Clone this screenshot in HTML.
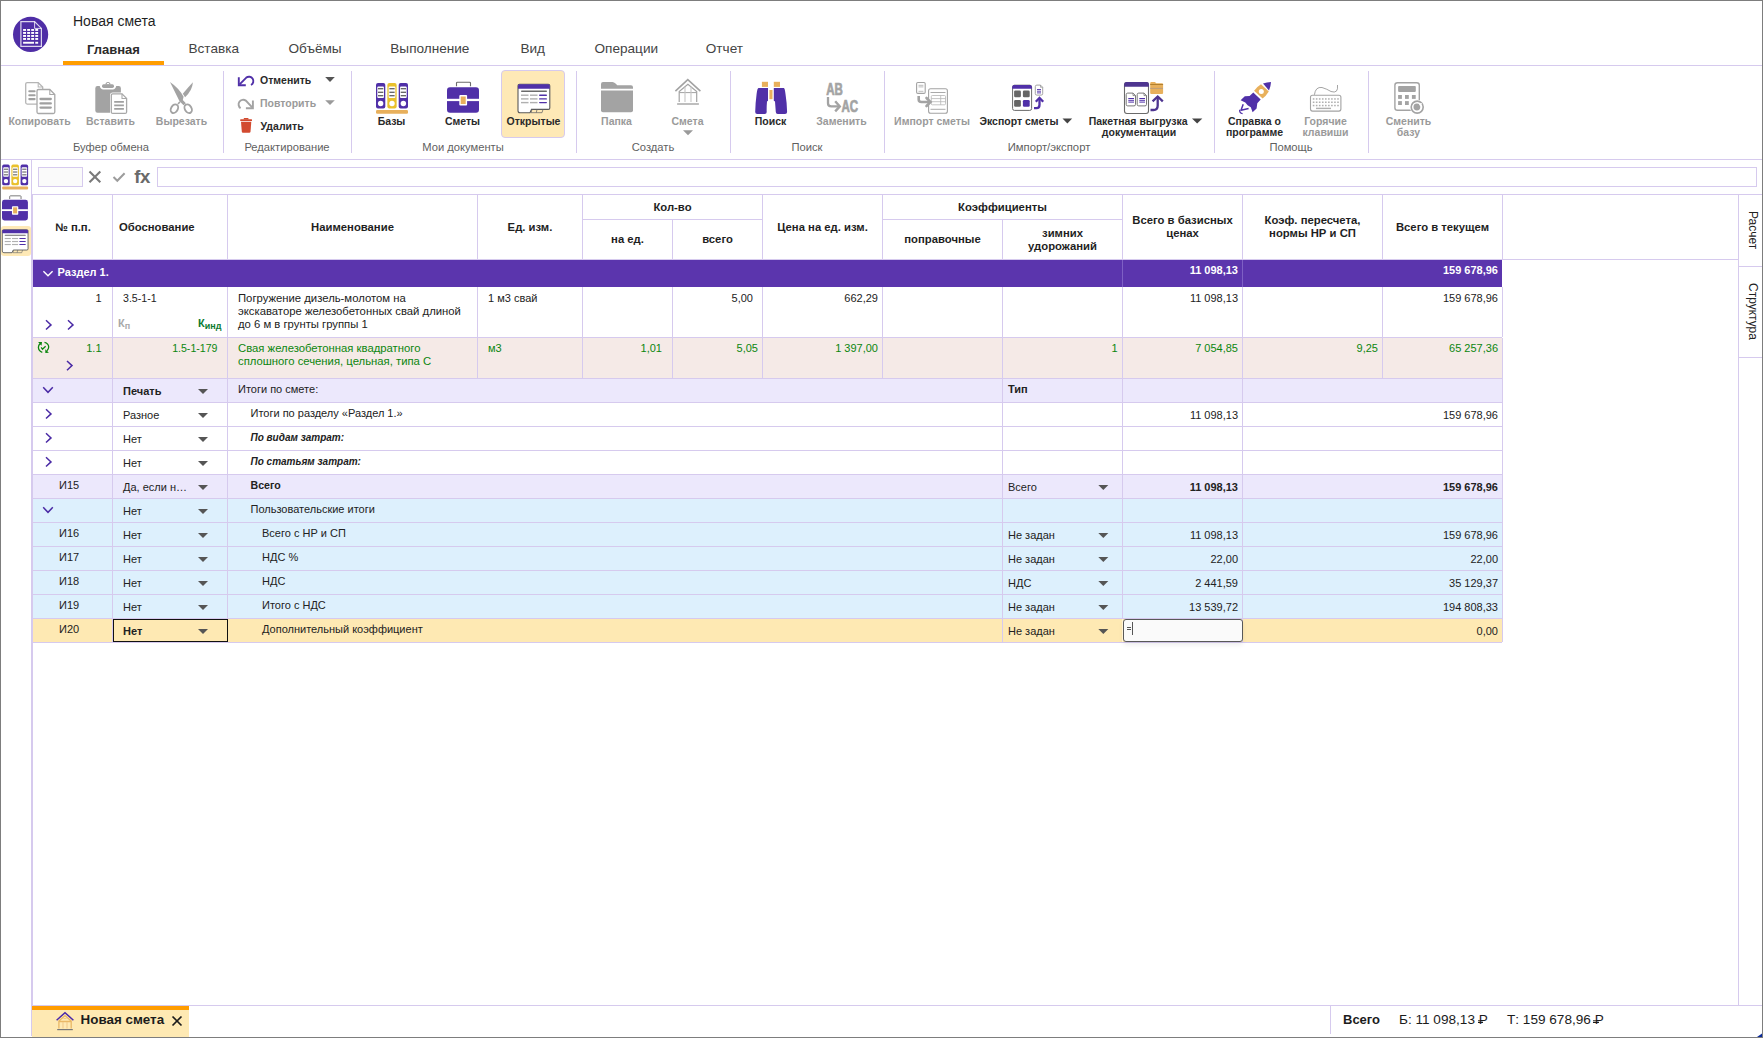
<!DOCTYPE html>
<html><head><meta charset="utf-8"><style>
html,body{margin:0;padding:0;}
body{width:1763px;height:1038px;position:relative;overflow:hidden;background:#fff;font-family:"Liberation Sans", sans-serif;}
#bg>div{position:absolute;}
.t{position:absolute;white-space:nowrap;line-height:1;}
svg{position:absolute;left:0;top:0;}
.rub{position:relative;}
.rub::after{content:'';position:absolute;left:-1.2px;width:5.2px;top:0.7em;height:1.2px;background:currentColor;box-shadow:0 -1.7px 0 currentColor;}
</style></head><body>
<div id="bg">
<div style="left:63px;top:61px;width:101px;height:4px;background:#ff9d00;"></div>
<div style="left:1px;top:65px;width:1761px;height:1px;background:#d6caee;"></div>
<div style="left:223px;top:71px;width:1px;height:82px;background:#d6caee;"></div>
<div style="left:351px;top:71px;width:1px;height:82px;background:#d6caee;"></div>
<div style="left:576px;top:71px;width:1px;height:82px;background:#d6caee;"></div>
<div style="left:730px;top:71px;width:1px;height:82px;background:#d6caee;"></div>
<div style="left:884px;top:71px;width:1px;height:82px;background:#d6caee;"></div>
<div style="left:1214px;top:71px;width:1px;height:82px;background:#d6caee;"></div>
<div style="left:1368px;top:71px;width:1px;height:82px;background:#d6caee;"></div>
<div style="left:1px;top:159px;width:1761px;height:1px;background:#d6caee;"></div>
<div style="left:501px;top:70px;width:64px;height:68px;background:#fee9b6;border:1px solid #d6caee;border-radius:4px;box-sizing:border-box;"></div>
<div style="left:1px;top:226px;width:30px;height:30px;background:#fee9b6;border-radius:3px;"></div>
<div style="left:31px;top:160px;width:1px;height:876px;background:#d6caee;"></div>
<div style="left:38px;top:167px;width:45px;height:20px;background:#fafafa;border:1px solid #d6caee;box-sizing:border-box;"></div>
<div style="left:157px;top:167px;width:1600px;height:20px;background:#fff;border:1px solid #d6caee;box-sizing:border-box;"></div>
<div style="left:32px;top:194px;width:1730px;height:1px;background:#d6caee;"></div>
<div style="left:32px;top:194px;width:1px;height:811px;background:#d6caee;"></div>
<div style="left:1738px;top:194px;width:1px;height:811px;background:#d6caee;"></div>
<div style="left:32px;top:1005px;width:1730px;height:1px;background:#d6caee;"></div>
<div style="left:112px;top:195px;width:1px;height:64px;background:#d6caee;"></div>
<div style="left:227px;top:195px;width:1px;height:64px;background:#d6caee;"></div>
<div style="left:477px;top:195px;width:1px;height:64px;background:#d6caee;"></div>
<div style="left:582px;top:195px;width:1px;height:64px;background:#d6caee;"></div>
<div style="left:672px;top:195px;width:1px;height:64px;background:#d6caee;"></div>
<div style="left:762px;top:195px;width:1px;height:64px;background:#d6caee;"></div>
<div style="left:882px;top:195px;width:1px;height:64px;background:#d6caee;"></div>
<div style="left:1002px;top:195px;width:1px;height:64px;background:#d6caee;"></div>
<div style="left:1122px;top:195px;width:1px;height:64px;background:#d6caee;"></div>
<div style="left:1242px;top:195px;width:1px;height:64px;background:#d6caee;"></div>
<div style="left:1382px;top:195px;width:1px;height:64px;background:#d6caee;"></div>
<div style="left:1502px;top:195px;width:1px;height:64px;background:#d6caee;"></div>
<div style="left:32px;top:259px;width:1706px;height:1px;background:#d6caee;"></div>
<div style="left:582px;top:219px;width:180px;height:1px;background:#d6caee;"></div>
<div style="left:882px;top:219px;width:240px;height:1px;background:#d6caee;"></div>
<div style="left:672px;top:195px;width:1px;height:24px;background:#fff;"></div>
<div style="left:1002px;top:195px;width:1px;height:24px;background:#fff;"></div>
<div style="left:1738px;top:266px;width:24px;height:1px;background:#d6caee;"></div>
<div style="left:1738px;top:357px;width:24px;height:1px;background:#d6caee;"></div>
<div style="left:33px;top:260px;width:1469px;height:27px;background:#5b35ad;"></div>
<div style="left:1122px;top:260px;width:1px;height:27px;background:#7e60c4;"></div>
<div style="left:1242px;top:260px;width:1px;height:27px;background:#7e60c4;"></div>
<div style="left:112px;top:287px;width:1px;height:50px;background:#d6caee;"></div>
<div style="left:227px;top:287px;width:1px;height:50px;background:#d6caee;"></div>
<div style="left:477px;top:287px;width:1px;height:50px;background:#d6caee;"></div>
<div style="left:582px;top:287px;width:1px;height:50px;background:#d6caee;"></div>
<div style="left:672px;top:287px;width:1px;height:50px;background:#d6caee;"></div>
<div style="left:762px;top:287px;width:1px;height:50px;background:#d6caee;"></div>
<div style="left:882px;top:287px;width:1px;height:50px;background:#d6caee;"></div>
<div style="left:1002px;top:287px;width:1px;height:50px;background:#d6caee;"></div>
<div style="left:1122px;top:287px;width:1px;height:50px;background:#d6caee;"></div>
<div style="left:1242px;top:287px;width:1px;height:50px;background:#d6caee;"></div>
<div style="left:1382px;top:287px;width:1px;height:50px;background:#d6caee;"></div>
<div style="left:1502px;top:287px;width:1px;height:50px;background:#d6caee;"></div>
<div style="left:32px;top:337px;width:1470px;height:1px;background:#d6caee;"></div>
<div style="left:33px;top:338px;width:1469px;height:40px;background:#f5eae7;"></div>
<div style="left:112px;top:338px;width:1px;height:40px;background:#d6caee;"></div>
<div style="left:227px;top:338px;width:1px;height:40px;background:#d6caee;"></div>
<div style="left:477px;top:338px;width:1px;height:40px;background:#d6caee;"></div>
<div style="left:582px;top:338px;width:1px;height:40px;background:#d6caee;"></div>
<div style="left:672px;top:338px;width:1px;height:40px;background:#d6caee;"></div>
<div style="left:762px;top:338px;width:1px;height:40px;background:#d6caee;"></div>
<div style="left:882px;top:338px;width:1px;height:40px;background:#d6caee;"></div>
<div style="left:1002px;top:338px;width:1px;height:40px;background:#d6caee;"></div>
<div style="left:1122px;top:338px;width:1px;height:40px;background:#d6caee;"></div>
<div style="left:1242px;top:338px;width:1px;height:40px;background:#d6caee;"></div>
<div style="left:1382px;top:338px;width:1px;height:40px;background:#d6caee;"></div>
<div style="left:1502px;top:338px;width:1px;height:40px;background:#d6caee;"></div>
<div style="left:32px;top:378px;width:1470px;height:1px;background:#d6caee;"></div>
<div style="left:33px;top:379px;width:1469px;height:23px;background:#ece8fc;"></div>
<div style="left:112px;top:378px;width:1px;height:24px;background:#d6caee;"></div>
<div style="left:227px;top:378px;width:1px;height:24px;background:#d6caee;"></div>
<div style="left:1002px;top:378px;width:1px;height:24px;background:#d6caee;"></div>
<div style="left:1122px;top:378px;width:1px;height:24px;background:#d6caee;"></div>
<div style="left:1242px;top:378px;width:1px;height:24px;background:#d6caee;"></div>
<div style="left:1502px;top:378px;width:1px;height:24px;background:#d6caee;"></div>
<div style="left:32px;top:402px;width:1470px;height:1px;background:#d6caee;"></div>
<div style="left:112px;top:402px;width:1px;height:24px;background:#d6caee;"></div>
<div style="left:227px;top:402px;width:1px;height:24px;background:#d6caee;"></div>
<div style="left:1002px;top:402px;width:1px;height:24px;background:#d6caee;"></div>
<div style="left:1122px;top:402px;width:1px;height:24px;background:#d6caee;"></div>
<div style="left:1242px;top:402px;width:1px;height:24px;background:#d6caee;"></div>
<div style="left:1502px;top:402px;width:1px;height:24px;background:#d6caee;"></div>
<div style="left:32px;top:426px;width:1470px;height:1px;background:#d6caee;"></div>
<div style="left:112px;top:426px;width:1px;height:24px;background:#d6caee;"></div>
<div style="left:227px;top:426px;width:1px;height:24px;background:#d6caee;"></div>
<div style="left:1002px;top:426px;width:1px;height:24px;background:#d6caee;"></div>
<div style="left:1122px;top:426px;width:1px;height:24px;background:#d6caee;"></div>
<div style="left:1242px;top:426px;width:1px;height:24px;background:#d6caee;"></div>
<div style="left:1502px;top:426px;width:1px;height:24px;background:#d6caee;"></div>
<div style="left:32px;top:450px;width:1470px;height:1px;background:#d6caee;"></div>
<div style="left:112px;top:450px;width:1px;height:24px;background:#d6caee;"></div>
<div style="left:227px;top:450px;width:1px;height:24px;background:#d6caee;"></div>
<div style="left:1002px;top:450px;width:1px;height:24px;background:#d6caee;"></div>
<div style="left:1122px;top:450px;width:1px;height:24px;background:#d6caee;"></div>
<div style="left:1242px;top:450px;width:1px;height:24px;background:#d6caee;"></div>
<div style="left:1502px;top:450px;width:1px;height:24px;background:#d6caee;"></div>
<div style="left:32px;top:474px;width:1470px;height:1px;background:#d6caee;"></div>
<div style="left:33px;top:475px;width:1469px;height:23px;background:#ece8fc;"></div>
<div style="left:112px;top:474px;width:1px;height:24px;background:#d6caee;"></div>
<div style="left:227px;top:474px;width:1px;height:24px;background:#d6caee;"></div>
<div style="left:1002px;top:474px;width:1px;height:24px;background:#d6caee;"></div>
<div style="left:1122px;top:474px;width:1px;height:24px;background:#d6caee;"></div>
<div style="left:1242px;top:474px;width:1px;height:24px;background:#d6caee;"></div>
<div style="left:1502px;top:474px;width:1px;height:24px;background:#d6caee;"></div>
<div style="left:32px;top:498px;width:1470px;height:1px;background:#d6caee;"></div>
<div style="left:33px;top:499px;width:1469px;height:23px;background:#ddf0fd;"></div>
<div style="left:112px;top:498px;width:1px;height:24px;background:#d6caee;"></div>
<div style="left:227px;top:498px;width:1px;height:24px;background:#d6caee;"></div>
<div style="left:1002px;top:498px;width:1px;height:24px;background:#d6caee;"></div>
<div style="left:1122px;top:498px;width:1px;height:24px;background:#d6caee;"></div>
<div style="left:1242px;top:498px;width:1px;height:24px;background:#d6caee;"></div>
<div style="left:1502px;top:498px;width:1px;height:24px;background:#d6caee;"></div>
<div style="left:32px;top:522px;width:1470px;height:1px;background:#d6caee;"></div>
<div style="left:33px;top:523px;width:1469px;height:23px;background:#ddf0fd;"></div>
<div style="left:112px;top:522px;width:1px;height:24px;background:#d6caee;"></div>
<div style="left:227px;top:522px;width:1px;height:24px;background:#d6caee;"></div>
<div style="left:1002px;top:522px;width:1px;height:24px;background:#d6caee;"></div>
<div style="left:1122px;top:522px;width:1px;height:24px;background:#d6caee;"></div>
<div style="left:1242px;top:522px;width:1px;height:24px;background:#d6caee;"></div>
<div style="left:1502px;top:522px;width:1px;height:24px;background:#d6caee;"></div>
<div style="left:32px;top:546px;width:1470px;height:1px;background:#d6caee;"></div>
<div style="left:33px;top:547px;width:1469px;height:23px;background:#ddf0fd;"></div>
<div style="left:112px;top:546px;width:1px;height:24px;background:#d6caee;"></div>
<div style="left:227px;top:546px;width:1px;height:24px;background:#d6caee;"></div>
<div style="left:1002px;top:546px;width:1px;height:24px;background:#d6caee;"></div>
<div style="left:1122px;top:546px;width:1px;height:24px;background:#d6caee;"></div>
<div style="left:1242px;top:546px;width:1px;height:24px;background:#d6caee;"></div>
<div style="left:1502px;top:546px;width:1px;height:24px;background:#d6caee;"></div>
<div style="left:32px;top:570px;width:1470px;height:1px;background:#d6caee;"></div>
<div style="left:33px;top:571px;width:1469px;height:23px;background:#ddf0fd;"></div>
<div style="left:112px;top:570px;width:1px;height:24px;background:#d6caee;"></div>
<div style="left:227px;top:570px;width:1px;height:24px;background:#d6caee;"></div>
<div style="left:1002px;top:570px;width:1px;height:24px;background:#d6caee;"></div>
<div style="left:1122px;top:570px;width:1px;height:24px;background:#d6caee;"></div>
<div style="left:1242px;top:570px;width:1px;height:24px;background:#d6caee;"></div>
<div style="left:1502px;top:570px;width:1px;height:24px;background:#d6caee;"></div>
<div style="left:32px;top:594px;width:1470px;height:1px;background:#d6caee;"></div>
<div style="left:33px;top:595px;width:1469px;height:23px;background:#ddf0fd;"></div>
<div style="left:112px;top:594px;width:1px;height:24px;background:#d6caee;"></div>
<div style="left:227px;top:594px;width:1px;height:24px;background:#d6caee;"></div>
<div style="left:1002px;top:594px;width:1px;height:24px;background:#d6caee;"></div>
<div style="left:1122px;top:594px;width:1px;height:24px;background:#d6caee;"></div>
<div style="left:1242px;top:594px;width:1px;height:24px;background:#d6caee;"></div>
<div style="left:1502px;top:594px;width:1px;height:24px;background:#d6caee;"></div>
<div style="left:32px;top:618px;width:1470px;height:1px;background:#d6caee;"></div>
<div style="left:33px;top:619px;width:1469px;height:23px;background:#fee9b3;"></div>
<div style="left:112px;top:618px;width:1px;height:24px;background:#d6caee;"></div>
<div style="left:227px;top:618px;width:1px;height:24px;background:#d6caee;"></div>
<div style="left:1002px;top:618px;width:1px;height:24px;background:#d6caee;"></div>
<div style="left:1122px;top:618px;width:1px;height:24px;background:#d6caee;"></div>
<div style="left:1242px;top:618px;width:1px;height:24px;background:#d6caee;"></div>
<div style="left:1502px;top:618px;width:1px;height:24px;background:#d6caee;"></div>
<div style="left:32px;top:642px;width:1470px;height:1px;background:#d6caee;"></div>
<div style="left:1123px;top:619px;width:120px;height:23px;background:#fafafa;border:1px solid #585858;border-radius:3px;box-sizing:border-box;box-shadow:0 3px 5px rgba(0,0,0,0.07);"></div>
<div style="left:1127px;top:627px;width:4.3px;height:1.1px;background:#555;"></div>
<div style="left:1127px;top:629.3px;width:4.3px;height:1.1px;background:#555;"></div>
<div style="left:1132px;top:622px;width:1.2px;height:13px;background:#555;"></div>
<div style="left:113px;top:619px;width:115px;height:23px;background:transparent;border:1.5px solid #111;box-sizing:border-box;"></div>
<div style="left:1122px;top:619px;width:1px;height:23px;background:#fff3d6;"></div>
<div style="left:32px;top:1006px;width:157px;height:4px;background:#ff9d00;"></div>
<div style="left:32px;top:1010px;width:157px;height:27px;background:#fee9b3;"></div>
<div style="left:1330px;top:1005px;width:1px;height:29px;background:#d6caee;"></div>
<div style="left:0px;top:0px;width:1763px;height:1px;background:#7d7d7d;"></div>
<div style="left:0px;top:0px;width:1px;height:1038px;background:#7d7d7d;"></div>
<div style="left:1762px;top:0px;width:1px;height:1038px;background:#7d7d7d;"></div>
<div style="left:0px;top:1037px;width:1763px;height:1px;background:#7d7d7d;"></div>
</div>
<div class="t" style="top:14.35px;font-size:14px;color:#1f1f1f;left:73px;">Новая смета</div>
<div class="t" style="top:43.00px;font-size:13px;color:#2b2b2b;font-weight:700;left:87px;">Главная</div>
<div class="t" style="top:42.49px;font-size:13.6px;color:#444;left:188.5px;">Вставка</div>
<div class="t" style="top:42.49px;font-size:13.6px;color:#444;left:288.5px;">Объёмы</div>
<div class="t" style="top:42.49px;font-size:13.6px;color:#444;left:390.3px;">Выполнение</div>
<div class="t" style="top:42.49px;font-size:13.6px;color:#444;left:520.4px;">Вид</div>
<div class="t" style="top:42.49px;font-size:13.6px;color:#444;left:594.5px;">Операции</div>
<div class="t" style="top:42.49px;font-size:13.6px;color:#444;left:705.8px;">Отчет</div>
<div class="t" style="top:116.11px;font-size:10.5px;color:#9a9a9a;font-weight:700;left:-110.5px;width:300px;text-align:center;">Копировать</div>
<div class="t" style="top:116.11px;font-size:10.5px;color:#9a9a9a;font-weight:700;left:-39.5px;width:300px;text-align:center;">Вставить</div>
<div class="t" style="top:116.11px;font-size:10.5px;color:#9a9a9a;font-weight:700;left:31.5px;width:300px;text-align:center;">Вырезать</div>
<div class="t" style="top:141.82px;font-size:11.2px;color:#5f5f5f;left:-39px;width:300px;text-align:center;">Буфер обмена</div>
<div class="t" style="top:74.91px;font-size:10.5px;color:#2a2a2a;font-weight:700;left:260px;">Отменить</div>
<div class="t" style="top:97.71px;font-size:10.5px;color:#9a9a9a;font-weight:700;left:260px;">Повторить</div>
<div class="t" style="top:120.61px;font-size:10.5px;color:#2a2a2a;font-weight:700;left:260.5px;">Удалить</div>
<div class="t" style="top:141.82px;font-size:11.2px;color:#5f5f5f;left:137px;width:300px;text-align:center;">Редактирование</div>
<div class="t" style="top:115.61px;font-size:10.5px;color:#2a2a2a;font-weight:700;left:241.5px;width:300px;text-align:center;">Базы</div>
<div class="t" style="top:115.61px;font-size:10.5px;color:#2a2a2a;font-weight:700;left:312.5px;width:300px;text-align:center;">Сметы</div>
<div class="t" style="top:115.61px;font-size:10.5px;color:#2a2a2a;font-weight:700;left:383.5px;width:300px;text-align:center;">Открытые</div>
<div class="t" style="top:141.82px;font-size:11.2px;color:#5f5f5f;left:313px;width:300px;text-align:center;">Мои документы</div>
<div class="t" style="top:115.61px;font-size:10.5px;color:#9a9a9a;font-weight:700;left:466.5px;width:300px;text-align:center;">Папка</div>
<div class="t" style="top:115.61px;font-size:10.5px;color:#9a9a9a;font-weight:700;left:537.5px;width:300px;text-align:center;">Смета</div>
<div class="t" style="top:141.82px;font-size:11.2px;color:#5f5f5f;left:503px;width:300px;text-align:center;">Создать</div>
<div class="t" style="top:115.61px;font-size:10.5px;color:#2a2a2a;font-weight:700;left:620.5px;width:300px;text-align:center;">Поиск</div>
<div class="t" style="top:115.61px;font-size:10.5px;color:#9a9a9a;font-weight:700;left:691.5px;width:300px;text-align:center;">Заменить</div>
<div class="t" style="top:141.82px;font-size:11.2px;color:#5f5f5f;left:657px;width:300px;text-align:center;">Поиск</div>
<div class="t" style="top:116.41px;font-size:10.5px;color:#9a9a9a;font-weight:700;left:782px;width:300px;text-align:center;">Импорт сметы</div>
<div class="t" style="top:116.41px;font-size:10.5px;color:#2a2a2a;font-weight:700;left:979.5px;">Экспорт сметы</div>
<div class="t" style="top:116.41px;font-size:10.5px;color:#2a2a2a;font-weight:700;left:1088.7px;">Пакетная выгрузка</div>
<div class="t" style="top:126.91px;font-size:10.5px;color:#2a2a2a;font-weight:700;left:989px;width:300px;text-align:center;">документации</div>
<div class="t" style="top:142.03px;font-size:11.3px;color:#5f5f5f;left:899px;width:300px;text-align:center;">Импорт/экспорт</div>
<div class="t" style="top:115.71px;font-size:10.5px;color:#2a2a2a;font-weight:700;left:1104.5px;width:300px;text-align:center;">Справка о</div>
<div class="t" style="top:126.61px;font-size:10.5px;color:#2a2a2a;font-weight:700;left:1104.5px;width:300px;text-align:center;">программе</div>
<div class="t" style="top:115.71px;font-size:10.5px;color:#9a9a9a;font-weight:700;left:1175.5px;width:300px;text-align:center;">Горячие</div>
<div class="t" style="top:126.61px;font-size:10.5px;color:#9a9a9a;font-weight:700;left:1175.5px;width:300px;text-align:center;">клавиши</div>
<div class="t" style="top:141.82px;font-size:11.2px;color:#5f5f5f;left:1141px;width:300px;text-align:center;">Помощь</div>
<div class="t" style="top:115.71px;font-size:10.5px;color:#9a9a9a;font-weight:700;left:1258.5px;width:300px;text-align:center;">Сменить</div>
<div class="t" style="top:126.61px;font-size:10.5px;color:#9a9a9a;font-weight:700;left:1258.5px;width:300px;text-align:center;">базу</div>
<div class="t" style="top:167.76px;font-size:18.6px;color:#6a6a6a;font-weight:700;left:134.3px;letter-spacing:-0.6px;">fx</div>
<div class="t" style="top:221.53px;font-size:11.3px;color:#1f1f1f;font-weight:700;left:-77px;width:300px;text-align:center;">№ п.п.</div>
<div class="t" style="top:221.53px;font-size:11.3px;color:#1f1f1f;font-weight:700;left:119px;">Обоснование</div>
<div class="t" style="top:221.53px;font-size:11.3px;color:#1f1f1f;font-weight:700;left:202.5px;width:300px;text-align:center;">Наименование</div>
<div class="t" style="top:221.53px;font-size:11.3px;color:#1f1f1f;font-weight:700;left:380px;width:300px;text-align:center;">Ед. изм.</div>
<div class="t" style="top:201.93px;font-size:11.3px;color:#1f1f1f;font-weight:700;left:522.5px;width:300px;text-align:center;">Кол-во</div>
<div class="t" style="top:234.13px;font-size:11.3px;color:#1f1f1f;font-weight:700;left:477.5px;width:300px;text-align:center;">на ед.</div>
<div class="t" style="top:234.13px;font-size:11.3px;color:#1f1f1f;font-weight:700;left:567.5px;width:300px;text-align:center;">всего</div>
<div class="t" style="top:221.53px;font-size:11.3px;color:#1f1f1f;font-weight:700;left:672.5px;width:300px;text-align:center;">Цена на ед. изм.</div>
<div class="t" style="top:201.93px;font-size:11.3px;color:#1f1f1f;font-weight:700;left:852.5px;width:300px;text-align:center;">Коэффициенты</div>
<div class="t" style="top:234.13px;font-size:11.3px;color:#1f1f1f;font-weight:700;left:792.5px;width:300px;text-align:center;">поправочные</div>
<div class="t" style="top:228.03px;font-size:11.3px;color:#1f1f1f;font-weight:700;left:912.5px;width:300px;text-align:center;">зимних</div>
<div class="t" style="top:241.43px;font-size:11.3px;color:#1f1f1f;font-weight:700;left:912.5px;width:300px;text-align:center;">удорожаний</div>
<div class="t" style="top:214.83px;font-size:11.3px;color:#1f1f1f;font-weight:700;left:1032.5px;width:300px;text-align:center;">Всего в базисных</div>
<div class="t" style="top:228.13px;font-size:11.3px;color:#1f1f1f;font-weight:700;left:1032.5px;width:300px;text-align:center;">ценах</div>
<div class="t" style="top:214.83px;font-size:11.3px;color:#1f1f1f;font-weight:700;left:1162.5px;width:300px;text-align:center;">Коэф. пересчета,</div>
<div class="t" style="top:228.13px;font-size:11.3px;color:#1f1f1f;font-weight:700;left:1162.5px;width:300px;text-align:center;">нормы НР и СП</div>
<div class="t" style="top:221.83px;font-size:11.3px;color:#1f1f1f;font-weight:700;left:1292.5px;width:300px;text-align:center;">Всего в текущем</div>
<div class="t" style="left:1747px;top:210.5px;font-size:12px;color:#222;writing-mode:vertical-rl;">Расчет</div>
<div class="t" style="left:1747px;top:283px;font-size:12px;color:#222;writing-mode:vertical-rl;">Структура</div>
<div class="t" style="top:267.19px;font-size:11px;color:#fff;font-weight:700;left:57.5px;">Раздел 1.</div>
<div class="t" style="top:264.69px;font-size:11px;color:#fff;font-weight:700;right:525px;">11 098,13</div>
<div class="t" style="top:264.69px;font-size:11px;color:#fff;font-weight:700;right:265px;">159 678,96</div>
<div class="t" style="top:293.29px;font-size:11px;color:#222;right:1661.5px;">1</div>
<div class="t" style="top:292.83px;font-size:10.6px;color:#222;left:123px;">3.5-1-1</div>
<div class="t" style="top:317.89px;font-size:11px;color:#a8a8a8;font-weight:700;left:118px;">К<span style="font-size:9px;position:relative;top:2.5px">п</span></div>
<div class="t" style="top:317.89px;font-size:11px;color:#0b7a30;font-weight:700;left:198px;">К<span style="font-size:9px;position:relative;top:2.5px">инд</span></div>
<div class="t" style="top:293.23px;font-size:11.3px;color:#222;left:238px;">Погружение дизель-молотом на</div>
<div class="t" style="top:306.13px;font-size:11.3px;color:#222;left:238px;">экскаваторе железобетонных свай длиной</div>
<div class="t" style="top:319.03px;font-size:11.3px;color:#222;left:238px;">до 6 м в грунты группы 1</div>
<div class="t" style="top:293.29px;font-size:11px;color:#222;left:488px;">1 м3 свай</div>
<div class="t" style="top:293.29px;font-size:11px;color:#222;right:1010px;">5,00</div>
<div class="t" style="top:293.29px;font-size:11px;color:#222;right:885px;">662,29</div>
<div class="t" style="top:293.29px;font-size:11px;color:#222;right:525px;">11 098,13</div>
<div class="t" style="top:293.29px;font-size:11px;color:#222;right:265px;">159 678,96</div>
<div class="t" style="top:343.09px;font-size:11px;color:#0b860e;right:1661.5px;">1.1</div>
<div class="t" style="top:343.43px;font-size:10.6px;color:#0b860e;right:1545.5px;">1.5-1-179</div>
<div class="t" style="top:343.23px;font-size:11.3px;color:#0b860e;left:238px;">Свая железобетонная квадратного</div>
<div class="t" style="top:356.13px;font-size:11.3px;color:#0b860e;left:238px;">сплошного сечения, цельная, типа С</div>
<div class="t" style="top:343.19px;font-size:11px;color:#0b860e;left:488px;">м3</div>
<div class="t" style="top:343.49px;font-size:11px;color:#0b860e;right:1101px;">1,01</div>
<div class="t" style="top:343.49px;font-size:11px;color:#0b860e;right:1005px;">5,05</div>
<div class="t" style="top:343.49px;font-size:11px;color:#0b860e;right:885px;">1 397,00</div>
<div class="t" style="top:343.49px;font-size:11px;color:#0b860e;right:645.5px;">1</div>
<div class="t" style="top:342.99px;font-size:11px;color:#0b860e;right:525px;">7 054,85</div>
<div class="t" style="top:342.99px;font-size:11px;color:#0b860e;right:385px;">9,25</div>
<div class="t" style="top:342.99px;font-size:11px;color:#0b860e;right:265px;">65 257,36</div>
<div class="t" style="top:386.49px;font-size:11px;color:#222;font-weight:700;left:123px;">Печать</div>
<div class="t" style="top:383.89px;font-size:11px;color:#222;left:238px;">Итоги по смете:</div>
<div class="t" style="top:383.99px;font-size:11px;color:#222;font-weight:700;left:1008px;">Тип</div>
<div class="t" style="top:410.49px;font-size:11px;color:#222;left:123px;">Разное</div>
<div class="t" style="top:407.89px;font-size:11px;color:#222;left:250.5px;">Итоги по разделу «Раздел 1.»</div>
<div class="t" style="top:410.29px;font-size:11px;color:#222;right:525px;">11 098,13</div>
<div class="t" style="top:410.29px;font-size:11px;color:#222;right:265px;">159 678,96</div>
<div class="t" style="top:434.49px;font-size:11px;color:#222;left:123px;">Нет</div>
<div class="t" style="top:432.74px;font-size:10px;color:#222;font-weight:700;font-style:italic;left:250.5px;">По видам затрат:</div>
<div class="t" style="top:458.49px;font-size:11px;color:#222;left:123px;">Нет</div>
<div class="t" style="top:456.74px;font-size:10px;color:#222;font-weight:700;font-style:italic;left:250.5px;">По статьям затрат:</div>
<div class="t" style="top:480.49px;font-size:11px;color:#222;left:59px;">И15</div>
<div class="t" style="top:482.49px;font-size:11px;color:#222;left:123px;">Да, если н…</div>
<div class="t" style="top:480.23px;font-size:10.6px;color:#222;font-weight:700;left:250.5px;">Всего</div>
<div class="t" style="top:482.29px;font-size:11px;color:#222;left:1008px;">Всего</div>
<div class="t" style="top:482.29px;font-size:11px;color:#222;font-weight:700;right:525px;">11 098,13</div>
<div class="t" style="top:482.29px;font-size:11px;color:#222;font-weight:700;right:265px;">159 678,96</div>
<div class="t" style="top:506.49px;font-size:11px;color:#222;left:123px;">Нет</div>
<div class="t" style="top:503.89px;font-size:11px;color:#222;left:250.5px;">Пользовательские итоги</div>
<div class="t" style="top:528.49px;font-size:11px;color:#222;left:59px;">И16</div>
<div class="t" style="top:530.49px;font-size:11px;color:#222;left:123px;">Нет</div>
<div class="t" style="top:527.89px;font-size:11px;color:#222;left:262px;">Всего с НР и СП</div>
<div class="t" style="top:530.29px;font-size:11px;color:#222;left:1008px;">Не задан</div>
<div class="t" style="top:530.29px;font-size:11px;color:#222;right:525px;">11 098,13</div>
<div class="t" style="top:530.29px;font-size:11px;color:#222;right:265px;">159 678,96</div>
<div class="t" style="top:552.49px;font-size:11px;color:#222;left:59px;">И17</div>
<div class="t" style="top:554.49px;font-size:11px;color:#222;left:123px;">Нет</div>
<div class="t" style="top:551.89px;font-size:11px;color:#222;left:262px;">НДС %</div>
<div class="t" style="top:554.29px;font-size:11px;color:#222;left:1008px;">Не задан</div>
<div class="t" style="top:554.29px;font-size:11px;color:#222;right:525px;">22,00</div>
<div class="t" style="top:554.29px;font-size:11px;color:#222;right:265px;">22,00</div>
<div class="t" style="top:576.49px;font-size:11px;color:#222;left:59px;">И18</div>
<div class="t" style="top:578.49px;font-size:11px;color:#222;left:123px;">Нет</div>
<div class="t" style="top:575.89px;font-size:11px;color:#222;left:262px;">НДС</div>
<div class="t" style="top:578.29px;font-size:11px;color:#222;left:1008px;">НДС</div>
<div class="t" style="top:578.29px;font-size:11px;color:#222;right:525px;">2 441,59</div>
<div class="t" style="top:578.29px;font-size:11px;color:#222;right:265px;">35 129,37</div>
<div class="t" style="top:600.49px;font-size:11px;color:#222;left:59px;">И19</div>
<div class="t" style="top:602.49px;font-size:11px;color:#222;left:123px;">Нет</div>
<div class="t" style="top:599.89px;font-size:11px;color:#222;left:262px;">Итого с НДС</div>
<div class="t" style="top:602.29px;font-size:11px;color:#222;left:1008px;">Не задан</div>
<div class="t" style="top:602.29px;font-size:11px;color:#222;right:525px;">13 539,72</div>
<div class="t" style="top:602.29px;font-size:11px;color:#222;right:265px;">194 808,33</div>
<div class="t" style="top:624.49px;font-size:11px;color:#222;left:59px;">И20</div>
<div class="t" style="top:626.49px;font-size:11px;color:#222;font-weight:700;left:123px;">Нет</div>
<div class="t" style="top:623.89px;font-size:11px;color:#222;left:262px;">Дополнительный коэффициент</div>
<div class="t" style="top:626.29px;font-size:11px;color:#222;left:1008px;">Не задан</div>
<div class="t" style="top:626.29px;font-size:11px;color:#222;right:265px;">0,00</div>
<div class="t" style="top:1013.46px;font-size:13.4px;color:#1c1c1c;font-weight:700;left:80.6px;">Новая смета</div>
<div class="t" style="top:1013.40px;font-size:13px;color:#1c1c1c;font-weight:700;left:1343px;">Всего</div>
<div class="t" style="top:1013.29px;font-size:13.6px;color:#1c1c1c;left:1399px;">Б: 11 098,13 <span class="rub">Р</span></div>
<div class="t" style="top:1013.29px;font-size:13.6px;color:#1c1c1c;left:1507px;">Т: 159 678,96 <span class="rub">Р</span></div>
<svg width="1763" height="1038" viewBox="0 0 1763 1038">
<circle cx="30.6" cy="34.4" r="17.6" fill="#4f2ea6"/>
<path d="M20.9 21.6 H34.6 L41.4 28.4 V46.4 H20.9 Z" fill="none" stroke="#fff" stroke-width="1.2" opacity="0.8"/><path d="M34.6 21.6 V28.4 H41.4" fill="none" stroke="#fff" stroke-width="1" opacity="0.8"/>
<rect x="23.10" y="29.00" width="2.9" height="1.9" fill="#fff"/>
<rect x="27.15" y="29.00" width="2.9" height="1.9" fill="#fff"/>
<rect x="31.20" y="29.00" width="2.9" height="1.9" fill="#fff"/>
<rect x="35.25" y="29.00" width="2.9" height="1.9" fill="#fff"/>
<rect x="23.10" y="32.00" width="2.9" height="1.9" fill="#fff"/>
<rect x="27.15" y="32.00" width="2.9" height="1.9" fill="#fff"/>
<rect x="31.20" y="32.00" width="2.9" height="1.9" fill="#fff"/>
<rect x="35.25" y="32.00" width="2.9" height="1.9" fill="#fff"/>
<rect x="23.10" y="35.00" width="2.9" height="1.9" fill="#fff"/>
<rect x="27.15" y="35.00" width="2.9" height="1.9" fill="#fff"/>
<rect x="31.20" y="35.00" width="2.9" height="1.9" fill="#fff"/>
<rect x="35.25" y="35.00" width="2.9" height="1.9" fill="#fff"/>
<rect x="23.10" y="38.00" width="2.9" height="1.9" fill="#fff"/>
<rect x="27.15" y="38.00" width="2.9" height="1.9" fill="#fff"/>
<rect x="31.20" y="38.00" width="2.9" height="1.9" fill="#fff"/>
<rect x="35.25" y="38.00" width="2.9" height="1.9" fill="#fff"/>
<rect x="23.1" y="41.8" width="10.9" height="1.9" fill="#fff"/><rect x="35.25" y="41.8" width="2.9" height="1.9" fill="#fff"/>
<path d="M325.2 77 L334.8 77 L330 82 Z" fill="#555"/>
<path d="M325.2 100.2 L334.8 100.2 L330 105 Z" fill="#9a9a9a"/>
<path d="M683 130.2 L693 130.2 L688 135.2 Z" fill="#9a9a9a"/>
<path d="M1062.5 118.6 L1072.2 118.6 L1067.35 123.5 Z" fill="#444"/>
<path d="M1192 118.6 L1202.3 118.6 L1197.15 123.5 Z" fill="#444"/>
<path d="M25.7 84.1 Q25.7 82.6 27.2 82.6 H38.2 L42.7 87.1 V102.6 Q42.7 104.1 41.2 104.1 H27.2 Q25.7 104.1 25.7 102.6 Z" fill="#fff" stroke="#b5b5b5" stroke-width="1.3"/><path d="M38.2 82.6 V87.1 H42.7" fill="none" stroke="#b5b5b5" stroke-width="1.04"/>
<path d="M29.3 91.3 H34.6 M29.3 95.3 H34.6 M29.3 99.1 H34.6" stroke="#a0a0a0" stroke-width="2.1" stroke-linecap="round"/>
<path d="M37 91.0 Q37 89.5 38.5 89.5 H49.8 L54.8 94.5 V112.0 Q54.8 113.5 53.3 113.5 H38.5 Q37 113.5 37 112.0 Z" fill="#fff" stroke="#a8a8a8" stroke-width="1.3"/><path d="M49.8 89.5 V94.5 H54.8" fill="none" stroke="#a8a8a8" stroke-width="1.04"/>
<path d="M40.5 99 H50.8 M40.5 103.4 H50.8 M40.5 107.6 H50.8" stroke="#a0a0a0" stroke-width="2.3" stroke-linecap="round"/>
<path d="M95.3 88.2 Q95.3 86 97.5 86 H99.7 Q100.5 89.4 103.2 89.4 H112.8 Q115.5 89.4 116.2 86 H118.7 Q120.9 86 120.9 88.2 V112.7 H97.5 Q95.3 112.7 95.3 110.5 Z" fill="#a3a3a3"/>
<rect x="102" y="84.3" width="12" height="3.6" rx="1.7" fill="#a3a3a3"/><path d="M105.2 84.6 Q105.6 81.9 107.5 81.9 H108.5 Q110.3 81.9 110.7 84.6 Z" fill="#a3a3a3"/><rect x="106.8" y="82.9" width="2.4" height="1.1" rx="0.5" fill="#fff"/>
<rect x="110" y="92.6" width="18" height="22" rx="2.8" fill="#fff"/>
<path d="M111.3 95.3 Q111.3 93.8 112.8 93.8 H122.0 L126.6 98.39999999999999 V111.9 Q126.6 113.4 125.1 113.4 H112.8 Q111.3 113.4 111.3 111.9 Z" fill="#fff" stroke="#a8a8a8" stroke-width="1.3"/><path d="M122.0 93.8 V98.39999999999999 H126.6" fill="none" stroke="#a8a8a8" stroke-width="1.04"/>
<path d="M114.2 101.9 H123.9 M114.2 105.4 H123.9 M114.2 108.9 H123.9" stroke="#a0a0a0" stroke-width="1.6"/>
<path d="M170 81.9 Q179 88 183.6 96.8 L182.8 100 L185.9 103.3 L183.5 105.3 L179.4 100.9 Z" fill="#a3a3a3"/>
<path d="M192.9 82.2 Q192.5 90 185.1 97.2 L182.8 93.7 Q187 88.5 192.9 82.2 Z" fill="#a3a3a3"/>
<path d="M178 104 L180 101.8" stroke="#a3a3a3" stroke-width="1.6"/>
<ellipse cx="174.4" cy="108.7" rx="3.3" ry="4.6" transform="rotate(32 174.4 108.7)" fill="none" stroke="#a3a3a3" stroke-width="1.9"/>
<ellipse cx="188.2" cy="108.7" rx="3.3" ry="4.6" transform="rotate(-32 188.2 108.7)" fill="none" stroke="#a3a3a3" stroke-width="1.9"/>
<path d="M251 85 A4.4 4.4 0 1 0 246.3 77.6 L239.6 84.4" fill="none" stroke="#5030a8" stroke-width="1.9"/>
<path d="M238.8 77.3 V85.3 H245.8" fill="none" stroke="#5030a8" stroke-width="1.9"/>
<path d="M240.6 108.2 A4.4 4.4 0 1 1 245.8 100.6 L252.2 107.4" fill="none" stroke="#a3a3a3" stroke-width="1.9"/>
<path d="M252.9 100.4 V108.3 H245.9" fill="none" stroke="#a3a3a3" stroke-width="1.9"/>
<rect x="240.2" y="119.2" width="11.8" height="1.8" rx="0.5" fill="#d24a2f"/><rect x="243.8" y="118" width="4.6" height="1.5" fill="#d24a2f"/>
<path d="M241 121.8 H251.3 L250.5 131.8 Q250.4 132.8 249.3 132.8 H243 Q241.9 132.8 241.8 131.8 Z" fill="#d24a2f"/>
<rect x="376.00" y="83.10" width="9.30" height="25.50" rx="2.00" fill="#5030a8"/><rect x="377.30" y="86.50" width="6.70" height="11.60" rx="1.00" fill="#fff"/><rect x="378.00" y="88.20" width="5.30" height="1.10" fill="#444"/><rect x="378.00" y="91.70" width="5.30" height="1.10" fill="#444"/><rect x="378.00" y="95.20" width="5.30" height="1.10" fill="#444"/><circle cx="380.65" cy="103.50" r="2.70" fill="#fff"/><rect x="387.35" y="83.10" width="9.30" height="25.50" rx="2.00" fill="#e9c12c"/><rect x="388.65" y="86.50" width="6.70" height="11.60" rx="1.00" fill="#fff"/><rect x="389.35" y="88.20" width="5.30" height="1.10" fill="#444"/><rect x="389.35" y="91.70" width="5.30" height="1.10" fill="#444"/><rect x="389.35" y="95.20" width="5.30" height="1.10" fill="#444"/><circle cx="392.00" cy="103.50" r="2.70" fill="#fff"/><rect x="398.70" y="83.10" width="9.30" height="25.50" rx="2.00" fill="#5030a8"/><rect x="400.00" y="86.50" width="6.70" height="11.60" rx="1.00" fill="#fff"/><rect x="400.70" y="88.20" width="5.30" height="1.10" fill="#444"/><rect x="400.70" y="91.70" width="5.30" height="1.10" fill="#444"/><rect x="400.70" y="95.20" width="5.30" height="1.10" fill="#444"/><circle cx="403.35" cy="103.50" r="2.70" fill="#fff"/><rect x="376.00" y="110.10" width="32.00" height="3.60" rx="1.20" fill="#e8b05c"/>
<path d="M456.50 86.20 V83.00 Q456.50 82.30 457.50 82.30 H469.50 Q470.50 82.30 470.50 83.00 V86.20" fill="none" stroke="#6b6b6b" stroke-width="1.10"/><rect x="447.00" y="87.20" width="32.00" height="25.50" rx="3.00" fill="#5030a8"/><rect x="447.00" y="98.80" width="32.00" height="2.30" fill="#fff"/><rect x="459.30" y="95.00" width="7.80" height="10.60" rx="1.00" fill="#fff"/><rect x="460.70" y="96.50" width="5.00" height="7.50" fill="#e8b05c"/>
<path d="M519.50 84.30 H548.30 Q549.80 84.30 549.80 85.80 V107.90 Q549.80 109.40 548.30 109.40 H531.50 L530.00 112.70 H520.00 Q518.00 112.70 518.00 110.70 V85.80 Q518.00 84.30 519.50 84.30 Z" fill="#fff" stroke="#5a5a5a" stroke-width="1.10"/><path d="M519.50 84.30 H548.30 Q549.80 84.30 549.80 85.80 V88.80 H518.00 V85.80 Q518.00 84.30 519.50 84.30 Z" fill="#5030a8"/><path d="M532.00 109.40 L531.00 112.70 H542.00 L543.00 109.40 M537.00 109.40 L536.30 112.70" fill="none" stroke="#6a6a6a" stroke-width="0.80"/><rect x="521.00" y="90.50" width="26.00" height="1.40" rx="0.70" fill="#6a6a6a"/><rect x="521.00" y="94.50" width="7.50" height="1.40" fill="#b0b0b0"/><rect x="530.00" y="94.50" width="7.50" height="1.40" fill="#b0b0b0"/><rect x="539.00" y="94.50" width="8.00" height="1.40" rx="0.70" fill="#5030a8"/><rect x="521.00" y="98.20" width="7.50" height="1.40" fill="#b0b0b0"/><rect x="530.00" y="98.20" width="7.50" height="1.40" fill="#b0b0b0"/><rect x="539.00" y="98.20" width="8.00" height="1.40" rx="0.70" fill="#5030a8"/><rect x="521.00" y="101.90" width="7.50" height="1.40" fill="#b0b0b0"/><rect x="530.00" y="101.90" width="7.50" height="1.40" fill="#b0b0b0"/><rect x="539.00" y="101.90" width="8.00" height="1.40" rx="0.70" fill="#5030a8"/>
<path d="M601 84 Q601 82 603 82 H612.5 Q614 82 615.5 83.6 L617.3 85.3 H631 Q633 85.3 633 87.3 V88.8 H601 Z" fill="#a3a3a3"/>
<path d="M601 90.6 H633 V110.3 Q633 112.3 631 112.3 H603 Q601 112.3 601 110.3 Z" fill="#a3a3a3"/>
<path d="M675.4 91.2 L687.8 79.6 L700.4 91.2" fill="none" stroke="#a3a3a3" stroke-width="1.6"/>
<path d="M679.2 102 V91.6 L687.9 84.4 L696.7 91.6 V102" fill="none" stroke="#a3a3a3" stroke-width="1.2"/>
<path d="M679.2 92.6 H696.7" stroke="#a3a3a3" stroke-width="1"/>
<path d="M685 86.5 V102 M691 86.5 V102" stroke="#c6c6c6" stroke-width="1.1"/>
<rect x="677.1" y="103.3" width="21.8" height="1.4" fill="#a3a3a3"/>
<rect x="761.9" y="81.8" width="6.1" height="5.1" fill="#e8b05c"/><rect x="773.8" y="81.8" width="6.2" height="5.1" fill="#e8b05c"/><rect x="769.4" y="90" width="3.1" height="9.2" fill="#e8b05c"/>
<path d="M758.5 88 H768 V100.8 L767 101.6 Q766.5 108 766.7 112 Q766.7 114 764.7 114 H757.2 Q755.2 114 755.2 112 Q755.5 102 756.6 94 Q757.3 88.2 758.5 88 Z" fill="#5030a8"/>
<path d="M783.9 88 H773.8 V100.8 L775 101.6 Q775.5 108 775.8 112 Q775.8 114 777.8 114 H785 Q787.1 114 787.1 112 Q786.8 102 785.5 94 Q784.8 88.2 783.9 88 Z" fill="#5030a8"/>
<text x="826.2" y="95" font-family="Liberation Sans" font-weight="700" font-size="16" fill="#a3a3a3" stroke="#a3a3a3" stroke-width="0.7" textLength="16.6" lengthAdjust="spacingAndGlyphs">AB</text>
<text x="841.4" y="111.8" font-family="Liberation Sans" font-weight="700" font-size="16" fill="#a3a3a3" stroke="#a3a3a3" stroke-width="0.7" textLength="16.6" lengthAdjust="spacingAndGlyphs">AC</text>
<path d="M828 97 V103.2 Q828 106.4 831.4 106.4 H839" fill="none" stroke="#a3a3a3" stroke-width="2.3"/><path d="M835.2 101.2 L839.8 106.4 L835.2 111.4" fill="none" stroke="#a3a3a3" stroke-width="2.4"/>
<rect x="916.6" y="82.5" width="8.6" height="10.9" rx="1.2" fill="#fff" stroke="#a3a3a3" stroke-width="1.1"/>
<path d="M918.5 85.3 H923.4 M918.5 86.9 H923.4 M918.5 91.3 H923.4" stroke="#b5b5b5" stroke-width="0.9"/>
<rect x="928.6" y="88.8" width="18.8" height="24.4" rx="2" fill="#fff" stroke="#a3a3a3" stroke-width="1.1"/>
<path d="M930.5 92.5 H945.5 M930.5 109.3 H945.5" stroke="#aaa" stroke-width="1"/><rect x="931.3" y="95.5" width="14.2" height="9.3" rx="1" fill="none" stroke="#b5b5b5" stroke-width="0.8"/><path d="M931.3 98.6 H945.5 M931.3 101.7 H945.5 M940.7 95.5 V104.8" stroke="#b5b5b5" stroke-width="0.8"/>
<path d="M918.7 96 V99.5 Q918.7 102 921.5 102 H930" fill="none" stroke="#a3a3a3" stroke-width="2.6"/><path d="M926.5 98 L930.5 102 L926.5 106" fill="none" stroke="#a3a3a3" stroke-width="2.6" stroke-linecap="round"/>
<rect x="1012.6" y="85.2" width="19" height="25.2" rx="1.8" fill="#fff" stroke="#6a6a6a" stroke-width="1"/>
<path d="M1014.4 85 H1029.8 Q1032 85 1032 87.2 V88.8 H1012.2 V87.2 Q1012.2 85 1014.4 85 Z" fill="#5030a8"/>
<rect x="1014.1" y="90.5" width="6.8" height="6.8" rx="1.3" fill="#666"/><rect x="1022.9" y="90.5" width="6.8" height="6.8" rx="1.3" fill="#666"/><rect x="1014.1" y="100" width="6.8" height="6.8" rx="1.3" fill="#666"/>
<rect x="1022.9" y="100" width="6.8" height="6.8" rx="1.3" fill="#5030a8"/>
<path d="M1035.3 86.6 Q1035.3 85.1 1036.8 85.1 H1040.5 L1042.7 87.3 V93.6 Q1042.7 95.1 1041.2 95.1 H1036.8 Q1035.3 95.1 1035.3 93.6 Z" fill="#fff" stroke="#8a8a8a" stroke-width="0.8"/><path d="M1040.5 85.1 V87.3 H1042.7" fill="none" stroke="#8a8a8a" stroke-width="0.6400000000000001"/>
<path d="M1037 89.5 H1041 M1037 91.2 H1041 M1037 92.9 H1041" stroke="#5030a8" stroke-width="0.9"/>
<path d="M1034 108.2 H1036.5 Q1039.5 108.2 1039.5 104.7 V98.5" fill="none" stroke="#5030a8" stroke-width="2.3"/><path d="M1035.8 101.7 L1039.5 97.8 L1043.2 101.7" fill="none" stroke="#5030a8" stroke-width="2.3"/>
<rect x="1124.5" y="82.5" width="24" height="31" rx="2.5" fill="#fff" stroke="#6a6a6a" stroke-width="1.1"/>
<path d="M1126.6 82 H1146.6 Q1148.9 82 1148.9 84.3 V86.8 H1124.2 V84.3 Q1124.2 82 1126.6 82 Z" fill="#4e3590"/>
<path d="M1126.2 94.6 Q1126.2 93.1 1127.7 93.1 H1133.0 L1135.5 95.6 V104.39999999999999 Q1135.5 105.89999999999999 1134.0 105.89999999999999 H1127.7 Q1126.2 105.89999999999999 1126.2 104.39999999999999 Z" fill="#fff" stroke="#6a6a6a" stroke-width="0.9"/><path d="M1133.0 93.1 V95.6 H1135.5" fill="none" stroke="#6a6a6a" stroke-width="0.7200000000000001"/>
<path d="M1137.2 94.6 Q1137.2 93.1 1138.7 93.1 H1144.0 L1146.5 95.6 V104.39999999999999 Q1146.5 105.89999999999999 1145.0 105.89999999999999 H1138.7 Q1137.2 105.89999999999999 1137.2 104.39999999999999 Z" fill="#fff" stroke="#6a6a6a" stroke-width="0.9"/><path d="M1144.0 93.1 V95.6 H1146.5" fill="none" stroke="#6a6a6a" stroke-width="0.7200000000000001"/>
<path d="M1128.3 98.5 H1134 M1128.3 100.3 H1134 M1128.3 102.1 H1134 M1139.3 98.5 H1145 M1139.3 100.3 H1145 M1139.3 102.1 H1145" stroke="#5030a8" stroke-width="1"/>
<path d="M1150.2 83.2 Q1150.2 82 1151.4 82 H1155 L1156.2 83.2 H1162 Q1163.1 83.2 1163.1 84.3 V93 Q1163.1 94 1162 94 H1151.3 Q1150.2 94 1150.2 93 Z" fill="#e8b05c"/>
<path d="M1150.2 84.5 H1163.1" stroke="#b08030" stroke-width="1"/><path d="M1150.5 88.4 H1163" stroke="#8a8aa0" stroke-width="0.9" stroke-dasharray="1 1"/>
<path d="M1150.5 110 H1153.5 Q1157.7 110 1157.7 105.5 V97.5" fill="none" stroke="#4e3590" stroke-width="2.3"/><path d="M1152.6 101.3 L1157.7 96.5 L1162.8 101.3" fill="none" stroke="#4e3590" stroke-width="2.3"/>
<path d="M1263 83.6 Q1267 82.2 1271 82 Q1270.8 86.5 1269 90.4 Z" fill="#5030a8"/>
<path d="M1261 84.2 L1268.8 91.5 Q1266 96 1262.6 98.6 L1254.1 90.7 Q1257 86.6 1261 84.2 Z" fill="#e8b05c"/><circle cx="1261.3" cy="91.5" r="2.5" fill="#fff"/>
<path d="M1253.3 92.4 L1260.7 99.6 L1257.3 103.2 L1256.6 108.6 L1252.6 112.3 L1250.8 107.3 L1247.6 105.3 L1245.3 102.6 L1240.6 100.2 L1244.8 96.3 L1249.6 96 Z" fill="#5030a8"/>
<path d="M1243.2 104.2 L1241 110.3 L1248.6 108.6" stroke="#5030a8" stroke-width="1.5" fill="none" stroke-linejoin="round"/>
<path d="M1239.6 109.8 Q1239.4 113.3 1242.6 113.6" stroke="#5030a8" stroke-width="1.2" fill="none"/>
<path d="M1314.4 94.8 Q1315.5 86.5 1322 87.5 Q1327 89 1331 91.5 Q1338.5 94 1337.5 85" fill="none" stroke="#9a9a9a" stroke-width="0.9"/>
<rect x="1310.5" y="95.2" width="30.4" height="15.9" rx="2" fill="#fff" stroke="#a3a3a3" stroke-width="1.1"/>
<rect x="1312.80" y="98.2" width="1.6" height="1.5" fill="#b0b0b0"/>
<rect x="1315.85" y="98.2" width="1.6" height="1.5" fill="#b0b0b0"/>
<rect x="1318.90" y="98.2" width="1.6" height="1.5" fill="#b0b0b0"/>
<rect x="1321.95" y="98.2" width="1.6" height="1.5" fill="#b0b0b0"/>
<rect x="1325.00" y="98.2" width="1.6" height="1.5" fill="#b0b0b0"/>
<rect x="1328.05" y="98.2" width="1.6" height="1.5" fill="#b0b0b0"/>
<rect x="1331.10" y="98.2" width="1.6" height="1.5" fill="#b0b0b0"/>
<rect x="1334.15" y="98.2" width="1.6" height="1.5" fill="#b0b0b0"/>
<rect x="1337.20" y="98.2" width="1.6" height="1.5" fill="#b0b0b0"/>
<rect x="1312.80" y="101.5" width="1.6" height="1.5" fill="#b0b0b0"/>
<rect x="1315.85" y="101.5" width="1.6" height="1.5" fill="#b0b0b0"/>
<rect x="1318.90" y="101.5" width="1.6" height="1.5" fill="#b0b0b0"/>
<rect x="1321.95" y="101.5" width="1.6" height="1.5" fill="#b0b0b0"/>
<rect x="1325.00" y="101.5" width="1.6" height="1.5" fill="#b0b0b0"/>
<rect x="1328.05" y="101.5" width="1.6" height="1.5" fill="#b0b0b0"/>
<rect x="1331.10" y="101.5" width="1.6" height="1.5" fill="#b0b0b0"/>
<rect x="1334.15" y="101.5" width="1.6" height="1.5" fill="#b0b0b0"/>
<rect x="1337.20" y="101.5" width="1.6" height="1.5" fill="#b0b0b0"/>
<rect x="1312.80" y="104.8" width="1.6" height="1.5" fill="#b0b0b0"/>
<rect x="1315.85" y="104.8" width="1.6" height="1.5" fill="#b0b0b0"/>
<rect x="1318.90" y="104.8" width="1.6" height="1.5" fill="#b0b0b0"/>
<rect x="1321.95" y="104.8" width="1.6" height="1.5" fill="#b0b0b0"/>
<rect x="1325.00" y="104.8" width="1.6" height="1.5" fill="#b0b0b0"/>
<rect x="1328.05" y="104.8" width="1.6" height="1.5" fill="#b0b0b0"/>
<rect x="1331.10" y="104.8" width="1.6" height="1.5" fill="#b0b0b0"/>
<rect x="1334.15" y="104.8" width="1.6" height="1.5" fill="#b0b0b0"/>
<rect x="1337.20" y="104.8" width="1.6" height="1.5" fill="#b0b0b0"/>
<rect x="1316" y="107.7" width="15" height="1.4" fill="#b0b0b0"/>
<rect x="1394.9" y="82.7" width="24.4" height="27.6" rx="2.6" fill="#fff" stroke="#a3a3a3" stroke-width="1.4"/>
<rect x="1398.1" y="86.1" width="17.7" height="5.8" rx="0.8" fill="#a3a3a3"/>
<rect x="1398.1" y="95" width="3.8" height="3.9" fill="#a3a3a3"/>
<rect x="1405" y="95" width="3.8" height="3.9" fill="#a3a3a3"/>
<rect x="1411.9" y="95" width="3.8" height="3.9" fill="#a3a3a3"/>
<rect x="1398.1" y="101.1" width="3.8" height="3.9" fill="#a3a3a3"/>
<rect x="1405" y="101.1" width="3.8" height="3.9" fill="#a3a3a3"/>
<circle cx="1417.2" cy="107.1" r="7.4" fill="#fff"/><circle cx="1417.2" cy="107.1" r="6" fill="none" stroke="#a3a3a3" stroke-width="1.6"/><circle cx="1416.9" cy="107" r="3.4" fill="#a3a3a3"/>
<path d="M1418.6 103.2 L1421.8 103.4 L1420.3 106.6 Z" fill="#fff"/><path d="M1420.6 103.6 L1421.8 103.4" stroke="#fff" stroke-width="0.8"/>
<rect x="2.20" y="164.60" width="7.53" height="20.66" rx="1.62" fill="#5030a8"/><rect x="3.25" y="167.35" width="5.43" height="9.40" rx="0.81" fill="#fff"/><rect x="3.82" y="168.73" width="4.29" height="0.89" fill="#444"/><rect x="3.82" y="171.57" width="4.29" height="0.89" fill="#444"/><rect x="3.82" y="174.40" width="4.29" height="0.89" fill="#444"/><circle cx="5.97" cy="181.12" r="2.19" fill="#fff"/><rect x="11.39" y="164.60" width="7.53" height="20.66" rx="1.62" fill="#e9c12c"/><rect x="12.45" y="167.35" width="5.43" height="9.40" rx="0.81" fill="#fff"/><rect x="13.01" y="168.73" width="4.29" height="0.89" fill="#444"/><rect x="13.01" y="171.57" width="4.29" height="0.89" fill="#444"/><rect x="13.01" y="174.40" width="4.29" height="0.89" fill="#444"/><circle cx="15.16" cy="181.12" r="2.19" fill="#fff"/><rect x="20.59" y="164.60" width="7.53" height="20.66" rx="1.62" fill="#5030a8"/><rect x="21.64" y="167.35" width="5.43" height="9.40" rx="0.81" fill="#fff"/><rect x="22.21" y="168.73" width="4.29" height="0.89" fill="#444"/><rect x="22.21" y="171.57" width="4.29" height="0.89" fill="#444"/><rect x="22.21" y="174.40" width="4.29" height="0.89" fill="#444"/><circle cx="24.35" cy="181.12" r="2.19" fill="#fff"/><rect x="2.20" y="186.47" width="25.92" height="2.92" rx="0.97" fill="#e8b05c"/>
<path d="M9.70 199.00 V196.41 Q9.70 195.84 10.51 195.84 H20.23 Q21.04 195.84 21.04 196.41 V199.00" fill="none" stroke="#6b6b6b" stroke-width="0.89"/><rect x="2.00" y="199.81" width="25.92" height="20.66" rx="2.43" fill="#5030a8"/><rect x="2.00" y="209.21" width="25.92" height="1.86" fill="#fff"/><rect x="11.96" y="206.13" width="6.32" height="8.59" rx="0.81" fill="#fff"/><rect x="13.10" y="207.34" width="4.05" height="6.08" fill="#e8b05c"/>
<path d="M3.51 229.70 H26.84 Q28.06 229.70 28.06 230.91 V248.82 Q28.06 250.03 26.84 250.03 H13.23 L12.02 252.70 H3.92 Q2.30 252.70 2.30 251.08 V230.91 Q2.30 229.70 3.51 229.70 Z" fill="#fff" stroke="#5a5a5a" stroke-width="0.89"/><path d="M3.51 229.70 H26.84 Q28.06 229.70 28.06 230.91 V233.34 H2.30 V230.91 Q2.30 229.70 3.51 229.70 Z" fill="#5030a8"/><path d="M13.64 250.03 L12.83 252.70 H21.74 L22.55 250.03 M17.69 250.03 L17.12 252.70" fill="none" stroke="#6a6a6a" stroke-width="0.65"/><rect x="4.73" y="234.72" width="21.06" height="1.13" rx="0.57" fill="#6a6a6a"/><rect x="4.73" y="237.96" width="6.08" height="1.13" fill="#b0b0b0"/><rect x="12.02" y="237.96" width="6.08" height="1.13" fill="#b0b0b0"/><rect x="19.31" y="237.96" width="6.48" height="1.13" rx="0.57" fill="#5030a8"/><rect x="4.73" y="240.96" width="6.08" height="1.13" fill="#b0b0b0"/><rect x="12.02" y="240.96" width="6.08" height="1.13" fill="#b0b0b0"/><rect x="19.31" y="240.96" width="6.48" height="1.13" rx="0.57" fill="#5030a8"/><rect x="4.73" y="243.96" width="6.08" height="1.13" fill="#b0b0b0"/><rect x="12.02" y="243.96" width="6.08" height="1.13" fill="#b0b0b0"/><rect x="19.31" y="243.96" width="6.48" height="1.13" rx="0.57" fill="#5030a8"/>
<path d="M42.3 352.3 Q38.5 351 38.4 347.2 Q38.4 345 40.4 343.6" fill="none" stroke="#0b860e" stroke-width="1.3"/>
<path d="M38.1 342 L42 341.9 L41.5 345.7 Z" fill="#0b860e"/>
<path d="M44.5 342.4 Q48.6 343.5 48.7 347 Q48.7 349 46.9 350.7" fill="none" stroke="#0b860e" stroke-width="1.3"/>
<path d="M45.3 349.2 L45.3 352.9 L48.9 352.8 Z" fill="#0b860e"/>
<path d="M41.2 347.4 L42.5 349.3 L45.6 346.3" fill="none" stroke="#0b860e" stroke-width="1.3"/>
<path d="M56.6 1020.2 L65 1012.7 L73.4 1020.2" fill="none" stroke="#4a28a8" stroke-width="1.5"/>
<path d="M58.9 1028.5 V1021 L65 1015.6 L71.2 1021 V1028.5 M58.9 1021.5 H71.2" fill="none" stroke="#e9b866" stroke-width="1.3"/>
<path d="M63 1022 V1028.5 M67 1022 V1028.5 M63.5 1018.5 H66.5" stroke="#f0cb8c" stroke-width="1.1"/>
<rect x="57.2" y="1029" width="15.6" height="1.2" fill="#777"/>
<path d="M89.5 171.5 L100.3 182.3 M100.3 171.5 L89.5 182.3" stroke="#7a7a7a" stroke-width="2.1"/>
<path d="M113.5 177 L117.3 180.8 L124.6 173.3" stroke="#9c9c9c" stroke-width="2" fill="none"/>
<path d="M43.4 271.2 L48 275.8 L52.6 271.2" stroke="#fff" stroke-width="1.4" fill="none"/>
<path d="M46 320.3 L51 324.90000000000003 L46 329.5" stroke="#4a2aa5" stroke-width="1.5" fill="none"/>
<path d="M68 320.3 L73 324.90000000000003 L68 329.5" stroke="#4a2aa5" stroke-width="1.5" fill="none"/>
<path d="M67 361 L72 365.6 L67 370.2" stroke="#4a2aa5" stroke-width="1.5" fill="none"/>
<path d="M43.2 387.3 L48.0 392.3 L52.800000000000004 387.3" stroke="#4a2aa5" stroke-width="1.5" fill="none"/>
<path d="M198 389 L208 389 L203 394 Z" fill="#555"/>
<path d="M46 409.3 L51 413.90000000000003 L46 418.5" stroke="#4a2aa5" stroke-width="1.5" fill="none"/>
<path d="M198 413 L208 413 L203 418 Z" fill="#555"/>
<path d="M46 433.3 L51 437.90000000000003 L46 442.5" stroke="#4a2aa5" stroke-width="1.5" fill="none"/>
<path d="M198 437 L208 437 L203 442 Z" fill="#555"/>
<path d="M46 457.3 L51 461.90000000000003 L46 466.5" stroke="#4a2aa5" stroke-width="1.5" fill="none"/>
<path d="M198 461 L208 461 L203 466 Z" fill="#555"/>
<path d="M198 485 L208 485 L203 490 Z" fill="#555"/>
<path d="M1098.3 485 L1108.3 485 L1103.3 490 Z" fill="#555"/>
<path d="M43.2 507.3 L48.0 512.3 L52.800000000000004 507.3" stroke="#4a2aa5" stroke-width="1.5" fill="none"/>
<path d="M198 509 L208 509 L203 514 Z" fill="#555"/>
<path d="M198 533 L208 533 L203 538 Z" fill="#555"/>
<path d="M1098.3 533 L1108.3 533 L1103.3 538 Z" fill="#555"/>
<path d="M198 557 L208 557 L203 562 Z" fill="#555"/>
<path d="M1098.3 557 L1108.3 557 L1103.3 562 Z" fill="#555"/>
<path d="M198 581 L208 581 L203 586 Z" fill="#555"/>
<path d="M1098.3 581 L1108.3 581 L1103.3 586 Z" fill="#555"/>
<path d="M198 605 L208 605 L203 610 Z" fill="#555"/>
<path d="M1098.3 605 L1108.3 605 L1103.3 610 Z" fill="#555"/>
<path d="M198 629 L208 629 L203 634 Z" fill="#555"/>
<path d="M1098.3 629 L1108.3 629 L1103.3 634 Z" fill="#555"/>
<path d="M172.5 1016.5 L181.5 1025.5 M181.5 1016.5 L172.5 1025.5" stroke="#1c1c1c" stroke-width="1.7"/>
<path d="M1762 1033.5 L1762 1037 L1757 1037 Z" fill="#0a2a9a"/>
</svg>
</body></html>
